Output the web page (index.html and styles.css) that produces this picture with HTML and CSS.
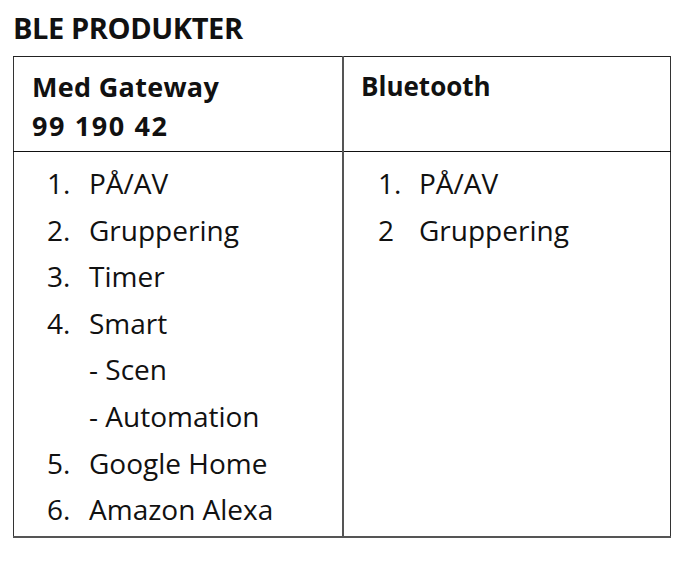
FILE: index.html
```html
<!DOCTYPE html>
<html lang="no">
<head>
<meta charset="utf-8">
<link rel="stylesheet" href="styles.css">
</head>
<body>
<div class="page">
  <h1 class="title">BLE PRODUKTER</h1>
  <table class="grid">
    <tr class="head">
      <th class="c1">Med Gateway<br><span class="code">99 190 42</span></th>
      <th class="c2">Bluetooth</th>
    </tr>
    <tr class="body">
      <td class="c1">
        <ul class="list">
          <li><span class="num">1.</span><span>PÅ/AV</span></li>
          <li><span class="num">2.</span><span>Gruppering</span></li>
          <li><span class="num">3.</span><span>Timer</span></li>
          <li><span class="num">4.</span><span>Smart</span></li>
          <li><span class="num"></span><span>- Scen</span></li>
          <li><span class="num"></span><span>- Automation</span></li>
          <li><span class="num">5.</span><span>Google Home</span></li>
          <li><span class="num">6.</span><span>Amazon Alexa</span></li>
        </ul>
      </td>
      <td class="c2">
        <ul class="list">
          <li><span class="num">1.</span><span>PÅ/AV</span></li>
          <li><span class="num">2</span><span>Gruppering</span></li>
        </ul>
      </td>
    </tr>
  </table>
</div>
</body>
</html>
```
FILE: styles.css
```css
html, body {
  margin: 0;
  padding: 0;
  background: #fff;
}
body {
  font-family: "Open Sans", "Liberation Sans", sans-serif;
  color: #111;
}
.page {
  padding: 8px 0 0 13px;
}
.title {
  margin: 0;
  font-size: 29px;
  line-height: 40px;
  font-weight: 700;
  letter-spacing: -0.4px;
  color: #111;
}
.grid {
  margin-top: 8px;
  width: 658px;
  border-collapse: collapse;
  border-top: 1px solid #222;
  border-left: 1px solid #333;
  border-right: 1px solid #333;
  border-bottom: 2px solid #555;
}
.grid th, .grid td {
  vertical-align: top;
  text-align: left;
  padding: 0;
}
.grid .c1 {
  width: 328px;
  border-right: 2px solid #555;
}
.head th {
  height: 95px;
  box-sizing: border-box;
  padding: 10px 0 0 18px;
  font-size: 26px;
  line-height: 39px;
  font-weight: 700;
  border-bottom: 1px solid #111;
}
.head .c1 {
  font-size: 27px;
  letter-spacing: 0.3px;
}
.head .code {
  letter-spacing: 1.6px;
}
.head .c2 {
  padding-left: 17px;
}
.body td {
  height: 384px;
}
.list {
  list-style: none;
  margin: 0;
  padding: 8px 0 0 33px;
  font-size: 28px;
  line-height: 46.6px;
}
.body .c2 .list {
  padding-left: 34px;
}
.list li {
  display: flex;
}
.num {
  width: 42px;
  flex: none;
}
.body .c2 .num {
  width: 41px;
}
```
